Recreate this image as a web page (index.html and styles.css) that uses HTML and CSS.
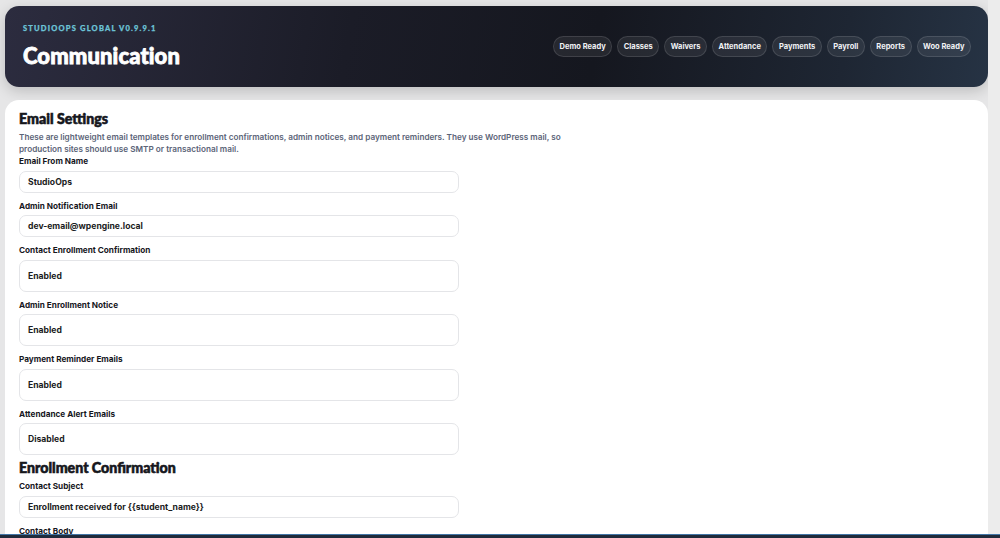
FILE: index.html
```html
<!DOCTYPE html>
<html lang="en">
<head>
<meta charset="utf-8">
<title>Communication</title>
<link rel="stylesheet" href="styles.css">
</head>
<body>
<div class="shell">
  <main class="main">
    <header class="hero">
      <div class="hero-title">
        <div class="eyebrow">STUDIOOPS GLOBAL V0.9.9.1</div>
        <h1>Communication</h1>
      </div>
      <nav class="pills">
        <span class="pill">Demo Ready</span>
        <span class="pill">Classes</span>
        <span class="pill">Waivers</span>
        <span class="pill">Attendance</span>
        <span class="pill">Payments</span>
        <span class="pill">Payroll</span>
        <span class="pill">Reports</span>
        <span class="pill">Woo Ready</span>
      </nav>
    </header>
    <section class="card">
      <h2>Email Settings</h2>
      <p class="desc">These are lightweight email templates for enrollment confirmations, admin notices, and payment reminders. They use WordPress mail, so production sites should use SMTP or transactional mail.</p>
      <div class="field">
        <label>Email From Name</label>
        <div class="input">StudioOps</div>
      </div>
      <div class="field">
        <label>Admin Notification Email</label>
        <div class="input">dev-email@wpengine.local</div>
      </div>
      <div class="field">
        <label>Contact Enrollment Confirmation</label>
        <div class="input select">Enabled</div>
      </div>
      <div class="field">
        <label>Admin Enrollment Notice</label>
        <div class="input select">Enabled</div>
      </div>
      <div class="field">
        <label>Payment Reminder Emails</label>
        <div class="input select">Enabled</div>
      </div>
      <div class="field">
        <label>Attendance Alert Emails</label>
        <div class="input select">Disabled</div>
      </div>
      <h2 class="sub">Enrollment Confirmation</h2>
      <div class="field first">
        <label>Contact Subject</label>
        <div class="input">Enrollment received for {{student_name}}</div>
      </div>
      <div class="field last">
        <label>Contact Body</label>
      </div>
    </section>
  </main>
  <aside class="gutter"></aside>
</div>
<div class="bottombar"></div>
</body>
</html>
```

FILE: styles.css
```css
html, body {
  margin: 0;
  padding: 0;
  height: 100%;
  overflow: hidden;
}
body {
  background: #e6e6e7;
  font-family: Inter, "Open Sans", "Liberation Sans", sans-serif;
  color: #15161c;
}
.shell {
  display: flex;
  height: 100%;
}
.main {
  flex: 1;
  display: flex;
  flex-direction: column;
  padding: 6px 0 0 5px;
  min-width: 0;
}
.gutter {
  width: 12px;
  flex: none;
  background: #ececec;
}
.hero {
  flex: none;
  height: 81px;
  box-sizing: border-box;
  border-radius: 14px;
  background: linear-gradient(100deg, #2c2c3f 0%, #1b1c27 35%, #15171f 60%, #1e2633 85%, #263344 100%);
  box-shadow: 0 4px 14px rgba(0,0,0,0.18);
  display: flex;
  align-items: center;
  justify-content: space-between;
  padding: 0 17px 0 18px;
}
.hero-title {
  display: flex;
  flex-direction: column;
  margin-top: -2px;
}
.eyebrow {
  color: #6cc3d6;
  font-family: Lato, Inter, sans-serif;
  font-size: 7.5px;
  font-weight: 900;
  letter-spacing: 1.2px;
  line-height: 10px;
  -webkit-text-stroke: 0.25px #6cc3d6;
}
.hero h1 {
  margin: 10px 0 0;
  color: #ffffff;
  font-family: Lato, Inter, sans-serif;
  font-size: 22px;
  font-weight: 900;
  line-height: 24px;
  letter-spacing: 0.1px;
  -webkit-text-stroke: 0.8px #ffffff;
}
.pills {
  display: flex;
  gap: 5px;
}
.pill {
  height: 21px;
  box-sizing: border-box;
  padding: 0 5.5px;
  border-radius: 11px;
  background: rgba(255,255,255,0.07);
  border: 1px solid rgba(255,255,255,0.12);
  color: #f1f2f5;
  font-size: 7.5px;
  font-weight: 700;
  display: flex;
  align-items: center;
}
.card {
  flex: 1;
  margin-top: 13px;
  background: #ffffff;
  border-radius: 14px 14px 0 0;
  padding: 10px 14px 0;
  overflow: hidden;
}
.card h2 {
  margin: 0;
  font-family: Lato, Inter, sans-serif;
  font-size: 14.2px;
  font-weight: 900;
  line-height: 18px;
  color: #16171d;
  -webkit-text-stroke: 0.6px #16171d;
}
.card h2.sub {
  margin-top: 4px;
}
.desc {
  margin: 3px 0 0;
  max-width: 560px;
  color: #5b6478;
  font-size: 8.2px;
  font-weight: 600;
  line-height: 12px;
}
.field {
  margin-top: 7px;
  width: 440px;
}
.desc + .field {
  margin-top: 0;
}
.field.first {
  margin-top: 3px;
}
.field label {
  display: block;
  font-size: 8.2px;
  font-weight: 700;
  line-height: 12px;
  color: #16171d;
  margin-bottom: 3.5px;
}
.field.last label {
  margin-bottom: 0;
}
.input {
  height: 22px;
  box-sizing: border-box;
  border: 1px solid #e4e5e8;
  border-radius: 7px;
  display: flex;
  align-items: center;
  padding: 0 8px;
  font-size: 8.6px;
  font-weight: 700;
  color: #1b1c22;
  background: #ffffff;
}
.input.select {
  height: 32px;
}
.bottombar {
  position: fixed;
  left: 0;
  right: 0;
  bottom: 0;
  height: 3px;
  background: #1f2b3b;
  border-top: 1px solid #4275a6;
}
```
